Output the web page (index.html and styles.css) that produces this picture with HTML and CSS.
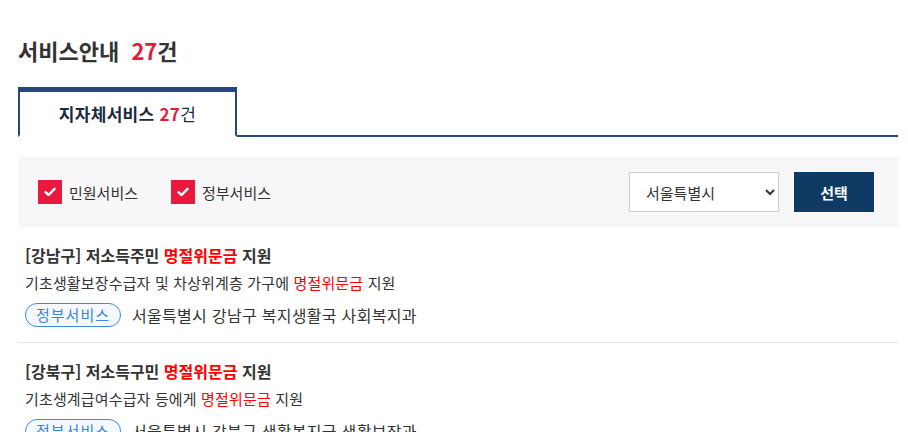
FILE: index.html
```html
<!DOCTYPE html>
<html lang="ko">
    <head>
        <meta charset="UTF-8">
        <title>서비스안내</title>
        <link rel="stylesheet" href="styles.css">
    </head>
    <body>
        <main class="wrap">
            <h2 class="page-title">서비스안내 <span class="count"><em>27</em>건</span></h2>

            <div class="tabs">
                <a class="tab active">지자체서비스 <em>27</em><span class="unit">건</span></a>
            </div>

            <div class="filter">
                <label class="check">
                    <span class="box">
                        <svg width="12" height="10" viewBox="0 0 12 10"><path d="M1.5 5.2 L4.6 8 L10.5 1.8" fill="none" stroke="#fff" stroke-width="2.4" stroke-linecap="round" stroke-linejoin="round"/></svg>
                    </span>
                    민원서비스
                </label>
                <label class="check">
                    <span class="box">
                        <svg width="12" height="10" viewBox="0 0 12 10"><path d="M1.5 5.2 L4.6 8 L10.5 1.8" fill="none" stroke="#fff" stroke-width="2.4" stroke-linecap="round" stroke-linejoin="round"/></svg>
                    </span>
                    정부서비스
                </label>

                <div class="filter-right">
                    <select class="region">
                        <option>서울특별시</option>
                        <option>부산광역시</option>
                        <option>대구광역시</option>
                    </select>
                    <button class="btn-select">선택</button>
                </div>
            </div>

            <ul class="service-list">
                <li class="item">
                    <p class="item-title">[강남구] 저소득주민 <span class="hl">명절위문금</span> 지원</p>
                    <p class="item-desc">기초생활보장수급자 및 차상위계층 가구에 <span class="hl">명절위문금</span> 지원</p>
                    <div class="item-meta">
                        <span class="tag">정부서비스</span>
                        <span class="dept">서울특별시 강남구 복지생활국 사회복지과</span>
                    </div>
                </li>
                <li class="item">
                    <p class="item-title">[강북구] 저소득구민 <span class="hl">명절위문금</span> 지원</p>
                    <p class="item-desc">기초생계급여수급자 등에게 <span class="hl">명절위문금</span> 지원</p>
                    <div class="item-meta">
                        <span class="tag">정부서비스</span>
                        <span class="dept">서울특별시 강북구 생활복지국 생활보장과</span>
                    </div>
                </li>
            </ul>
        </main>
    </body>
</html>
```

FILE: styles.css
```css
html, body {
    margin: 0;
    padding: 0;
}

body {
    background: #fff;
    color: #333;
    font-family: "Noto Sans CJK KR", "Noto Sans", sans-serif;
}

.wrap {
    margin: 0 10px 0 18px;
    overflow: hidden;
}

.page-title {
    margin: 36px 0 23px;
    font-size: 22px;
    line-height: 28px;
    font-weight: bold;
    color: #333;
}

.page-title .count {
    margin-left: 6px;
}

.page-title em,
.tab em {
    font-style: normal;
    color: #e8193c;
}

/* tabs */
.tabs {
    display: flex;
    border-bottom: 2px solid #27467b;
}

.tab {
    width: 215px;
    height: 43px;
    margin-bottom: -2px;
    border: 2px solid #27467b;
    border-top-width: 5px;
    border-bottom: 2px solid #fff;
    display: flex;
    align-items: center;
    justify-content: center;
    font-size: 17px;
    font-weight: bold;
    color: #1d2b3d;
    letter-spacing: 0.3px;
}

.tab em {
    margin-left: 5px;
}

.tab .unit {
    font-weight: normal;
}

/* filter bar */
.filter {
    margin-top: 20px;
    height: 70px;
    background: #f7f7f9;
    display: flex;
    align-items: center;
    padding: 0 24px 0 20px;
}

.check {
    display: flex;
    align-items: center;
    gap: 7px;
    font-size: 15px;
    color: #333;
    margin-right: 33px;
}

.box {
    width: 24px;
    height: 24px;
    background: #e8193c;
    display: flex;
    align-items: center;
    justify-content: center;
}

.filter-right {
    margin-left: auto;
    display: flex;
    gap: 15px;
}

.region {
    width: 150px;
    height: 40px;
    border: 1px solid #ccc;
    background: #fff;
    padding-left: 12px;
    font-family: inherit;
    font-size: 15px;
    color: #333;
}

.btn-select {
    width: 80px;
    height: 40px;
    border: none;
    background: #0f3a63;
    color: #fff;
    font-family: inherit;
    font-size: 15px;
    font-weight: bold;
}

/* list */
.service-list {
    list-style: none;
    margin: 0;
    padding: 0;
}

.item {
    padding: 17px 7px 15px;
    border-bottom: 1px solid #e4e4e4;
}

.item p {
    margin: 0;
}

.item-title {
    font-size: 16px;
    line-height: 22px;
    font-weight: bold;
    color: #333;
}

.item-desc {
    margin-top: 6px !important;
    font-size: 15px;
    line-height: 22px;
    color: #333;
    letter-spacing: 0.15px;
}

.hl {
    color: #f00;
}

.item-meta {
    margin-top: 9px;
    display: flex;
    align-items: center;
    gap: 11px;
}

.tag {
    height: 22px;
    line-height: 22px;
    padding: 0 10px;
    border: 1px solid #3d8be0;
    border-radius: 12px;
    background: #f5f9ff;
    color: #3a86d8;
    font-size: 15px;
    letter-spacing: 1px;
}

.dept {
    font-size: 16px;
    color: #333;
    letter-spacing: 0.3px;
}
```
